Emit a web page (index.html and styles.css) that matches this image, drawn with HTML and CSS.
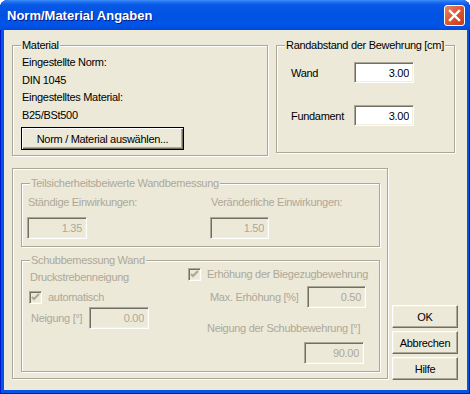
FILE: index.html
```html
<!DOCTYPE html>
<html lang="de">
<head>
    <meta charset="UTF-8">
    <title>Norm/Material Angaben</title>
    <link rel="stylesheet" href="styles.css">
</head>
<body>
    <div class="window">
        <div class="titlebar">
            <span class="title">Norm/Material Angaben</span>
            <button class="close" title="Schließen">
                <svg width="19" height="19" viewBox="0 0 19 19">
                    <path d="M5 5 L14 14 M14 5 L5 14" stroke="#fff" stroke-width="2.4" stroke-linecap="square"/>
                </svg>
            </button>
        </div>

        <div class="client">
            <div class="top-row">
                <div class="group material">
                    <div class="group-title">Material</div>
                    <div class="info">
                        <div>Eingestellte Norm:</div>
                        <div>DIN 1045</div>
                        <div>Eingestelltes Material:</div>
                        <div>B25/BSt500</div>
                    </div>
                    <button class="btn default select-btn">Norm / Material auswählen...</button>
                </div>

                <div class="group cover">
                    <div class="group-title">Randabstand der Bewehrung [cm]</div>
                    <div class="field-row first">
                        <label class="cover-label" for="wand">Wand</label>
                        <input class="edit" id="wand" value="3.00">
                    </div>
                    <div class="field-row second">
                        <label class="cover-label" for="fundament">Fundament</label>
                        <input class="edit" id="fundament" value="3.00">
                    </div>
                </div>
            </div>

            <div class="bottom-row">
                <div class="frame disabled">
                    <div class="group safety">
                        <div class="group-title">Teilsicherheitsbeiwerte Wandbemessung</div>
                        <div class="safety-grid">
                            <div class="safety-col">
                                <div class="lbl">Ständige Einwirkungen:</div>
                                <input class="edit" value="1.35" disabled>
                            </div>
                            <div class="safety-col">
                                <div class="lbl">Veränderliche Einwirkungen:</div>
                                <input class="edit narrow" value="1.50" disabled>
                            </div>
                        </div>
                    </div>

                    <div class="group shear">
                        <div class="group-title">Schubbemessung Wand</div>
                        <div class="shear-cols">
                            <div class="shear-left">
                                <div class="lbl strut">Druckstrebenneigung</div>
                                <div class="check-row auto">
                                    <span class="check">
                                        <svg width="11" height="11" viewBox="0 0 11 11"><polyline points="2,5 4,7 9,2" fill="none" stroke="#aca899" stroke-width="2"/></svg>
                                    </span>
                                    <span class="lbl">automatisch</span>
                                </div>
                                <div class="field-row angle">
                                    <span class="lbl angle-label">Neigung [°]</span>
                                    <input class="edit" value="0.00" disabled>
                                </div>
                            </div>
                            <div class="shear-right">
                                <div class="check-row bend">
                                    <span class="check">
                                        <svg width="11" height="11" viewBox="0 0 11 11"><polyline points="2,5 4,7 9,2" fill="none" stroke="#aca899" stroke-width="2"/></svg>
                                    </span>
                                    <span class="lbl">Erhöhung der Biegezugbewehrung</span>
                                </div>
                                <div class="field-row max">
                                    <span class="lbl max-label">Max. Erhöhung [%]</span>
                                    <input class="edit narrow" value="0.50" disabled>
                                </div>
                                <div class="lbl rebar">Neigung der Schubbewehrung [°]</div>
                                <input class="edit rebar-edit" value="90.00" disabled>
                            </div>
                        </div>
                    </div>
                </div>

                <div class="buttons">
                    <button class="btn">OK</button>
                    <button class="btn">Abbrechen</button>
                    <button class="btn">Hilfe</button>
                </div>
            </div>
        </div>
    </div>
</body>
</html>
```

FILE: styles.css
```css
body {
    margin: 0;
    background: #fff;
    font-family: 'Liberation Sans', Arial, sans-serif;
}
.window {
    width: 470px;
    height: 394px;
    display: flex;
    flex-direction: column;
    background: #0854e0;
    border-radius: 8px 8px 0 0;
    box-shadow: inset 1px 0 #0019cf, inset -1px 0 #0019cf, inset 0 -1px #0019cf;
    overflow: hidden;
}
.titlebar {
    height: 30px;
    flex: none;
    display: flex;
    align-items: flex-start;
    justify-content: space-between;
    padding: 0 5px 0 7px;
    background: linear-gradient(#3d8ef8 0, #1f70f0 2px, #0858e6 5px, #0052e2 16px, #0056ea 25px, #0048d6 30px);
}
.title {
    margin-top: 8px;
    font-size: 13px;
    line-height: 16px;
    font-weight: bold;
    color: #fff;
    text-shadow: 1px 1px #0a1883;
}
.close {
    margin-top: 5px;
    width: 21px;
    height: 21px;
    padding: 0;
    display: flex;
    align-items: center;
    justify-content: center;
    border: 1px solid #fff;
    border-radius: 3px;
    background: linear-gradient(135deg, #e8866a 0, #dd5a35 45%, #c13c18 100%);
}
.client {
    flex: 1;
    margin: 0 3px 4px 4px;
    padding: 15px 0 0 8px;
    background: #ece9d8;
    font-size: 11px;
    letter-spacing: -0.3px;
    color: #000;
}

/* group boxes */
.group {
    box-sizing: border-box;
    border: 1px solid #aca899;
    box-shadow: 1px 1px #fff, inset 1px 1px #fff;
}
.group-title {
    width: fit-content;
    margin-top: -7px;
    padding: 0 1px;
    line-height: 13px;
    background: #ece9d8;
}
.top-row {
    display: flex;
    align-items: flex-start;
    gap: 8px;
}
.material {
    width: 256px;
    height: 111px;
    padding-left: 8px;
}
.info {
    margin-top: 2px;
    line-height: 17.5px;
    padding-left: 1px;
}
.select-btn {
    margin-top: 3px;
    width: 163px;
    height: 20px;
}
.cover {
    width: 179px;
    height: 108px;
}
.cover .group-title {
    margin-left: 8px;
}
.field-row {
    display: flex;
    align-items: center;
}
.cover .field-row {
    padding-left: 14px;
}
.cover .first {
    margin-top: 10px;
}
.cover .second {
    margin-top: 22px;
}
.cover-label {
    width: 63px;
}

/* edit fields */
.edit {
    box-sizing: border-box;
    width: 60px;
    height: 22px;
    margin: 0;
    padding: 0 4px 0 2px;
    border: 1px solid;
    border-color: #aca899 #fff #fff #aca899;
    box-shadow: inset 1px 1px #716f64, inset -1px -1px #f1efe2;
    background: #fff;
    font: 11px 'Liberation Sans', Arial, sans-serif;
    letter-spacing: -0.3px;
    color: #000;
    text-align: right;
    outline: none;
}
.edit:disabled {
    background: #ece9d8;
    color: #aca899;
}
.edit.narrow {
    width: 59px;
}
.cover .edit {
    height: 21px;
}

/* disabled area */
.bottom-row {
    display: flex;
    align-items: flex-start;
    margin-top: 12px;
    gap: 4px;
}
.frame {
    box-sizing: border-box;
    width: 376px;
    height: 211px;
    padding: 14px 0 0 8px;
    border: 1px solid #aca899;
    box-shadow: 1px 1px #fff, inset 1px 1px #fff;
}
.disabled .lbl,
.disabled .group-title {
    color: #aca899;
}
.safety {
    width: 359px;
    height: 64px;
}
.safety .group-title,
.shear .group-title {
    margin-left: 8px;
}
.safety-grid {
    display: grid;
    grid-template-columns: 183px 1fr;
    padding-left: 5px;
    margin-top: 6px;
}
.safety-col .lbl {
    padding-left: 1px;
    margin-bottom: 8px;
}
.shear {
    width: 359px;
    height: 112px;
    margin-top: 13px;
}
.shear-cols {
    display: flex;
}
.shear-left {
    width: 166px;
}
.lbl {
    line-height: 13px;
}
.strut {
    margin-top: 4px;
    padding-left: 8px;
}
.check-row {
    display: flex;
    align-items: center;
    gap: 6px;
}
.check {
    box-sizing: border-box;
    width: 13px;
    height: 13px;
    display: flex;
    align-items: center;
    justify-content: center;
    border: 1px solid;
    border-color: #aca899 #fff #fff #aca899;
    box-shadow: inset 1px 1px #716f64, inset -1px -1px #f1efe2;
    background: #ece9d8;
}
.auto {
    margin: 7px 0 0 7px;
}
.angle {
    margin-top: 3px;
    padding-left: 9px;
}
.angle-label {
    width: 58px;
}
.bend {
    margin-top: 1px;
}
.max {
    margin-top: 5px;
    padding-left: 22px;
}
.max-label {
    width: 97px;
}
.rebar {
    margin-top: 14px;
    padding-left: 19px;
}
.rebar-edit {
    display: block;
    margin: 7px 0 0 116px;
}

/* push buttons */
.btn {
    box-sizing: border-box;
    height: 23px;
    padding: 0;
    border: 1px solid;
    border-color: #fff #716f64 #716f64 #fff;
    box-shadow: inset -1px -1px #aca899, inset 1px 1px #f1efe2;
    background: #ece9d8;
    font: 11px 'Liberation Sans', Arial, sans-serif;
    letter-spacing: -0.3px;
    color: #000;
}
.btn.default {
    border: 1px solid #000;
    box-shadow: inset 1px 1px #fff, inset -1px -1px #716f64, inset -2px -2px #aca899;
}
.buttons {
    align-self: flex-end;
    margin-bottom: -1px;
    display: flex;
    flex-direction: column;
    gap: 3px;
}
.buttons .btn {
    width: 66px;
}
```
